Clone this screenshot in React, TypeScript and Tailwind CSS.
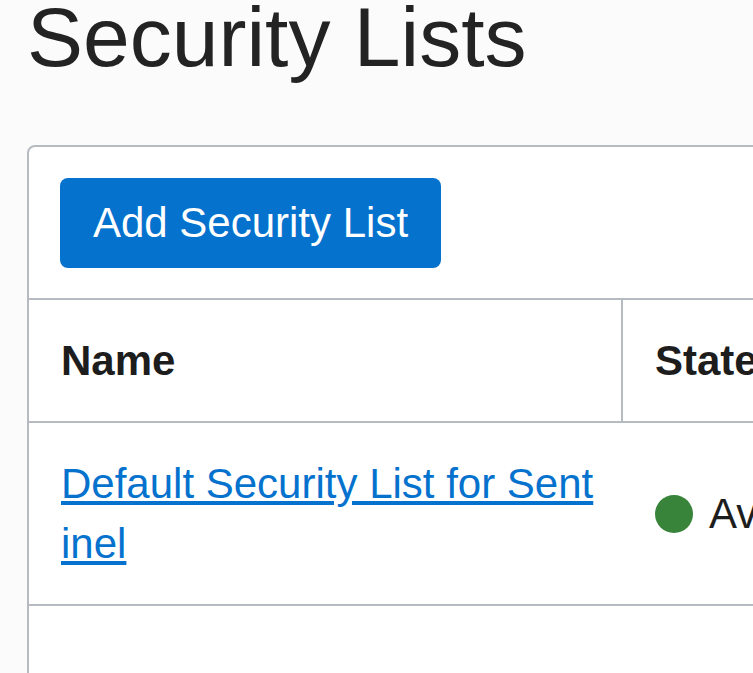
import { useState } from 'react';

type SecurityList = {
  id: string;
  name: string;
  state: string;
};

const securityLists: SecurityList[] = [
  { id: 'sl-1', name: 'Default Security List for Sentinel', state: 'Available' },
];

export default function App() {
  const [rows] = useState<SecurityList[]>(securityLists);

  return (
    <div
      className="h-screen overflow-hidden bg-[#fbfbfb] px-[27px]"
      style={{ fontFamily: '"Liberation Sans", Arial, sans-serif' }}
    >
      <h1 className="-mt-[5px] text-[84px] leading-none font-normal text-[#232323] whitespace-nowrap">
        Security Lists
      </h1>

      <div className="mt-[66px] w-[900px] rounded-tl-lg border-2 border-[#b6bbc2] bg-white">
        {/* toolbar */}
        <div className="pt-[31px] pb-[30px] pl-[31px]">
          <button className="h-[90px] w-[381px] rounded-lg bg-[#0572ce] text-[42px] leading-none text-white whitespace-nowrap">
            Add Security List
          </button>
        </div>

        {/* table header */}
        <div className="grid grid-cols-[594px_1fr] border-t-2 border-b-2 border-[#b6bbc2]">
          <div className="flex h-[121px] items-center border-r-2 border-[#b6bbc2] pl-[32px] text-[42px] font-bold text-[#1d1d1d]">
            Name
          </div>
          <div className="flex h-[121px] items-center pl-[32px] text-[42px] font-bold text-[#1d1d1d]">
            State
          </div>
        </div>

        {/* rows */}
        {rows.map((row) => (
          <div key={row.id} className="grid grid-cols-[594px_1fr] border-b-2 border-[#b6bbc2]">
            <div className="flex h-[181px] items-center pl-[32px] pr-[24px]">
              <a
                href="#"
                className="block w-[536px] break-all text-[42px] leading-[60px] text-[#0572ce] underline"
              >
                {row.name}
              </a>
            </div>
            <div className="flex h-[181px] items-center gap-4 pl-[32px] text-[42px] text-[#1d1d1d] whitespace-nowrap">
              <span className="h-[38px] w-[38px] shrink-0 rounded-full bg-[#37843a]" />
              {row.state}
            </div>
          </div>
        ))}

        <div className="h-[200px]" />
      </div>
    </div>
  );
}
